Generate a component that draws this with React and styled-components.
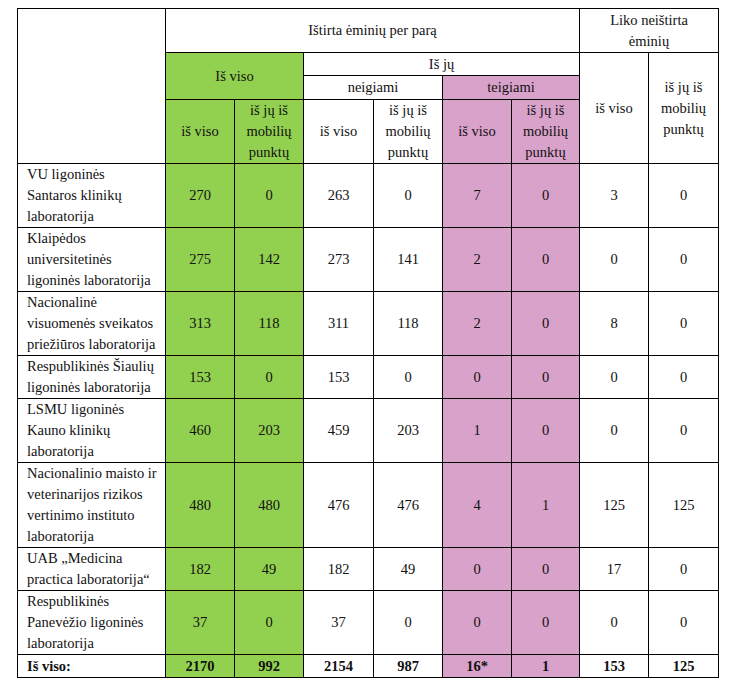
import React from 'react';
import styled, { createGlobalStyle } from 'styled-components';

const GREEN = '#92d050';
const PINK = '#d9a2cb';
const SERIF = `"Liberation Serif", Tinos, "Times New Roman", serif`;

const rows = [
  { name: ['VU ligoninės', 'Santaros klinikų', 'laboratorija'], v: [270, 0, 263, 0, 7, 0, 3, 0] },
  { name: ['Klaipėdos', 'universitetinės', 'ligoninės laboratorija'], v: [275, 142, 273, 141, 2, 0, 0, 0] },
  { name: ['Nacionalinė', 'visuomenės sveikatos', 'priežiūros laboratorija'], v: [313, 118, 311, 118, 2, 0, 8, 0] },
  { name: ['Respublikinės Šiaulių', 'ligoninės laboratorija'], v: [153, 0, 153, 0, 0, 0, 0, 0] },
  { name: ['LSMU ligoninės', 'Kauno klinikų', 'laboratorija'], v: [460, 203, 459, 203, 1, 0, 0, 0] },
  {
    name: ['Nacionalinio maisto ir', 'veterinarijos rizikos', 'vertinimo instituto', 'laboratorija'],
    v: [480, 480, 476, 476, 4, 1, 125, 125],
  },
  { name: ['UAB „Medicina', 'practica laboratorija“'], v: [182, 49, 182, 49, 0, 0, 17, 0] },
  { name: ['Respublikinės', 'Panevėžio ligoninės', 'laboratorija'], v: [37, 0, 37, 0, 0, 0, 0, 0] },
];

const totals = ['2170', '992', '2154', '987', '16*', '1', '153', '125'];
const widths = [148, 69, 69, 70, 69, 69, 68, 69, 70];

// column index -> fill
const fillFor = (i) => (i < 2 ? GREEN : i === 4 || i === 5 ? PINK : undefined);

const GlobalStyle = createGlobalStyle`
  body {
    margin: 8px;
    background: #fff;
    font-family: ${SERIF};
    color: #111;
  }
`;

const Wrap = styled.div`
  padding-left: 9px;
`;

const Table = styled.table`
  border-collapse: collapse;
  table-layout: fixed;
  width: 701px;
  font-family: ${SERIF};
  font-size: 14.5px;
  line-height: 21px;
  color: #111;
`;

const Row = styled.tr`
  height: ${(p) => (p.$h ? `${p.$h}px` : 'auto')};
`;

const Cell = styled.td`
  border: 1px solid #000;
  padding: 0 4px;
  text-align: center;
  vertical-align: middle;
  background: ${(p) => p.$fill || 'transparent'};
  font-weight: ${(p) => (p.$bold ? 700 : 400)};
`;

const NameCell = styled(Cell)`
  text-align: left;
  padding: 0 4px 0 9px;
  white-space: nowrap;
`;

const Mobile = () => (
  <>
    iš jų iš
    <br />
    mobilių
    <br />
    punktų
  </>
);

export default function App() {
  return (
    <>
      <GlobalStyle />
      <Wrap>
        <Table>
          <colgroup>
            {widths.map((w, i) => (
              <col key={i} style={{ width: w }} />
            ))}
          </colgroup>
          <tbody>
            <Row $h={44}>
              <Cell rowSpan={4} />
              <Cell colSpan={6}>Ištirta ėminių per parą</Cell>
              <Cell colSpan={2}>
                Liko neištirta
                <br />
                ėminių
              </Cell>
            </Row>
            <Row $h={23}>
              <Cell colSpan={2} rowSpan={2} $fill={GREEN}>
                Iš viso
              </Cell>
              <Cell colSpan={4}>Iš jų</Cell>
              <Cell rowSpan={3}>iš viso</Cell>
              <Cell rowSpan={3}>
                <Mobile />
              </Cell>
            </Row>
            <Row $h={24}>
              <Cell colSpan={2}>neigiami</Cell>
              <Cell colSpan={2} $fill={PINK}>
                teigiami
              </Cell>
            </Row>
            <Row $h={64}>
              {[0, 1, 2, 3, 4, 5].map((i) => (
                <Cell key={i} $fill={fillFor(i)}>
                  {i % 2 === 0 ? 'iš viso' : <Mobile />}
                </Cell>
              ))}
            </Row>
            {rows.map((r, ri) => (
              <Row key={ri} $h={r.name.length * 21 + 1}>
                <NameCell>
                  {r.name.map((l, li) => (
                    <React.Fragment key={li}>
                      {li > 0 && <br />}
                      {l}
                    </React.Fragment>
                  ))}
                </NameCell>
                {r.v.map((n, i) => (
                  <Cell key={i} $fill={fillFor(i)}>
                    {n}
                  </Cell>
                ))}
              </Row>
            ))}
            <Row $h={23}>
              <NameCell $bold>Iš viso:</NameCell>
              {totals.map((t, i) => (
                <Cell key={i} $bold $fill={fillFor(i)}>
                  {t}
                </Cell>
              ))}
            </Row>
          </tbody>
        </Table>
      </Wrap>
    </>
  );
}
